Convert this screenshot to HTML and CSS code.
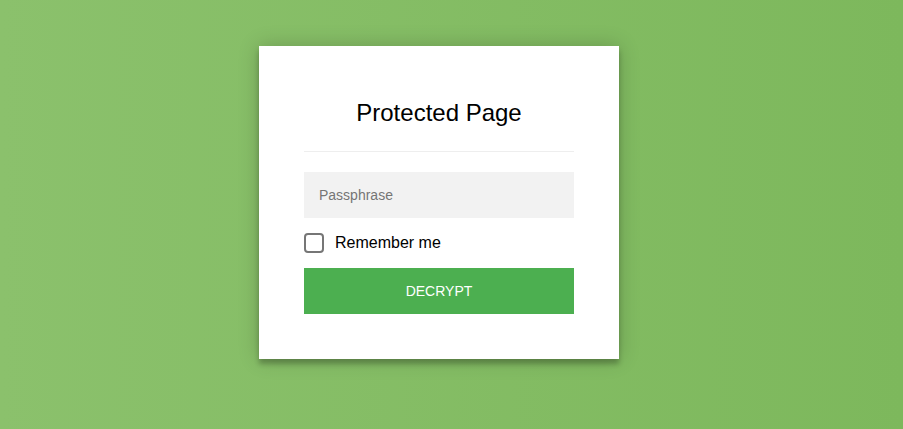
FILE: index.html
```html
<!DOCTYPE html>
<html lang="en">
<head>
<meta charset="utf-8">
<title>Protected Page</title>
<link rel="stylesheet" href="styles.css">
</head>
<body>
<div class="page">
  <form class="card">
    <p class="title">Protected Page</p>
    <hr class="rule">
    <input class="pass" type="password" placeholder="Passphrase">
    <label class="remember">
      <input class="check" type="checkbox">
      <span>Remember me</span>
    </label>
    <button class="btn" type="button">Decrypt</button>
  </form>
</div>
</body>
</html>
```

FILE: styles.css
```css
html, body {
  margin: 0;
  height: 100%;
}
body {
  background: linear-gradient(to right, #8bc16c, #7db85c);
  font-family: "Liberation Sans", Arial, sans-serif;
}
.page {
  display: flex;
  justify-content: center;
  align-items: flex-start;
  padding: 46px 25px 0 0;
}
.card {
  width: 360px;
  box-sizing: border-box;
  padding: 45px;
  background: #fff;
  text-align: center;
  box-shadow: 0 0 20px 0 rgba(0,0,0,0.2), 0 5px 5px 0 rgba(0,0,0,0.24);
  display: flex;
  flex-direction: column;
}
.title {
  margin: 8px 0 0;
  font-size: 24px;
  line-height: 28px;
  color: #000;
}
.rule {
  margin: 24px 0 20px;
  border: 0;
  height: 1px;
  background: #eee;
}
.pass {
  outline: 0;
  background: #f2f2f2;
  width: 100%;
  height: 46px;
  border: 0;
  margin: 0 0 15px;
  padding: 0 15px;
  box-sizing: border-box;
  font-size: 14px;
  font-family: "Liberation Sans", Arial, sans-serif;
}
.pass::placeholder {
  color: #757575;
}
.remember {
  display: flex;
  align-items: center;
  margin-bottom: 15px;
  font-size: 16px;
  color: #000;
  height: 20px;
}
.check {
  appearance: none;
  -webkit-appearance: none;
  box-sizing: border-box;
  width: 20px;
  height: 20px;
  margin: 0 11px 0 0;
  border: 2px solid #767676;
  border-radius: 4px;
  background: #fff;
  flex: none;
}
.btn {
  text-transform: uppercase;
  outline: 0;
  background: #4caf50;
  width: 100%;
  border: 0;
  padding: 0 15px;
  height: 46px;
  color: #fff;
  font-size: 14px;
  font-family: "Liberation Sans", Arial, sans-serif;
}
```
